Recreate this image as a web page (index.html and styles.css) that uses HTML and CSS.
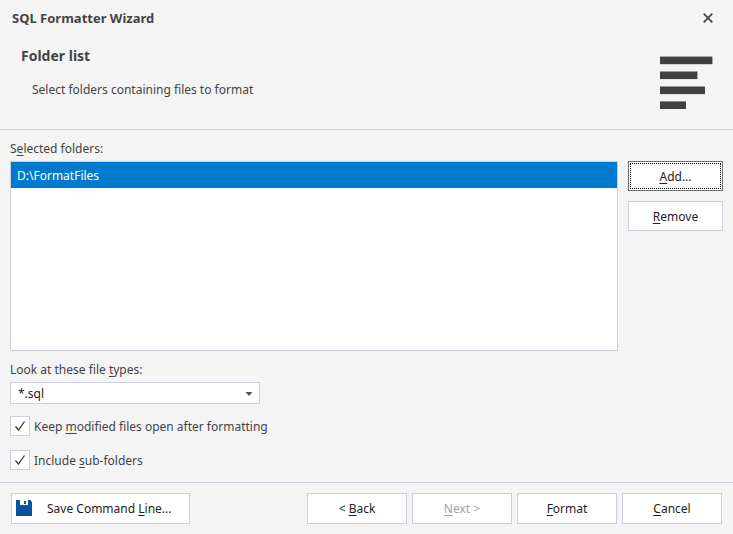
FILE: index.html
```html
<!DOCTYPE html>
<html lang="en">
<head>
    <meta charset="UTF-8">
    <meta name="viewport" content="width=device-width, initial-scale=1.0">
    <title>SQL Formatter Wizard</title>
    <link rel="stylesheet" href="styles.css">
</head>
<body>
    <form class="wizard">
        <header class="header">
            <div class="titlebar">
                <h1>SQL Formatter Wizard</h1>
                <button type="button" class="close" aria-label="Close">
                    <svg width="10" height="10" viewBox="0 0 10 10"><path d="M0.7 0.7L9.3 9.3M9.3 0.7L0.7 9.3" stroke="#444" stroke-width="1.7"/></svg>
                </button>
            </div>
            <div class="banner">
                <div class="intro">
                    <h2>Folder list</h2>
                    <p>Select folders containing files to format</p>
                </div>
                <svg class="lines" width="53" height="53" viewBox="0 0 53 53" fill="#404040">
                    <rect x="0" y="0.6" width="52.4" height="7.6"/>
                    <rect x="0" y="15.5" width="37.4" height="7.6"/>
                    <rect x="0" y="30.5" width="45" height="7.6"/>
                    <rect x="0" y="45.4" width="26" height="7.6"/>
                </svg>
            </div>
        </header>

        <main class="content">
            <label class="caption" for="folders">S<u>e</u>lected folders:</label>
            <div class="folders">
                <select id="folders" class="folder-list" size="7">
                    <option selected>D:\FormatFiles</option>
                </select>
                <div class="folder-actions">
                    <button type="button" class="btn default"><span><u>A</u>dd...</span></button>
                    <button type="button" class="btn"><span><u>R</u>emove</span></button>
                </div>
            </div>

            <label class="caption types-caption" for="types">Look at these file <u>t</u>ypes:</label>
            <div class="combo">
                <select id="types">
                    <option>*.sql</option>
                </select>
                <svg class="arrow" width="8" height="4" viewBox="0 0 8 4"><path d="M0.5 0H7.5L4 4Z" fill="#555"/></svg>
            </div>

            <div class="checks">
                <label class="check">
                    <input type="checkbox" checked>
                    <span>Keep <u>m</u>odified files open after formatting</span>
                </label>
                <label class="check">
                    <input type="checkbox" checked>
                    <span>Include <u>s</u>ub-folders</span>
                </label>
            </div>
        </main>

        <footer class="footer">
            <button type="button" class="btn save">
                <svg width="16" height="16" viewBox="0 0 16 16" fill="#0b529c"><path d="M0 0H4V5H12V0H14L16 2V16H0Z"/><path d="M8 1H10V4H8Z"/></svg>
                <span>Save Command <u>L</u>ine...</span>
            </button>
            <button type="button" class="btn"><span>&lt; <u>B</u>ack</span></button>
            <button type="button" class="btn" disabled><span><u>N</u>ext &gt;</span></button>
            <button type="submit" class="btn"><span><u>F</u>ormat</span></button>
            <button type="button" class="btn"><span><u>C</u>ancel</span></button>
        </footer>
    </form>
</body>
</html>
```

FILE: styles.css
```css
* {
    box-sizing: border-box;
}
body {
    margin: 0;
    background: #f4f4f4;
    color: #444;
    font: 12px/18px Tahoma, "Noto Sans", sans-serif;
}
button, select, input {
    font: inherit;
    color: #1e1e1e;
    margin: 0;
}
h1, h2, p {
    margin: 0;
}
u {
    text-underline-offset: 2px;
}
.wizard {
    display: flex;
    flex-direction: column;
    min-height: 100vh;
}
.header {
    border-bottom: 1px solid #cccedb;
}
.titlebar {
    display: flex;
    justify-content: space-between;
    align-items: center;
    padding: 9px 20px 0 12px;
}
.titlebar h1 {
    font-size: 13px;
}
.close {
    display: flex;
    padding: 0;
    border: none;
    background: none;
}
.banner {
    display: flex;
    justify-content: space-between;
    align-items: flex-end;
    padding: 21px 20px 20px 21px;
}
.intro h2 {
    font-size: 14px;
    line-height: 16px;
}
.intro p {
    padding: 17px 0 10px 11px;
}
.content {
    flex: 1;
    padding: 10px 10px 12px;
}
.caption {
    display: block;
    padding-bottom: 3px;
}
.folders {
    display: flex;
    gap: 10px;
}
.folder-list {
    flex: 1;
    height: 190px;
    padding: 0;
    border: 1px solid #cccedb;
    border-radius: 0;
    background: #fff;
    outline: none;
    overflow: hidden;
}
.folder-list option {
    padding: 5px 6px 4px;
}
.folder-list option:checked {
    background: #007acc linear-gradient(#007acc, #007acc);
    color: #fff;
}
.folder-actions {
    display: flex;
    flex-direction: column;
    gap: 10px;
    width: 95px;
}
.btn {
    height: 30px;
    padding: 2px 0 0;
    border: 1px solid #cccedb;
    background: #fff;
}
.btn.default {
    border-color: #707070;
    outline: 1px dotted #000;
    outline-offset: -3px;
}
.btn:disabled {
    color: #a2a4a5;
}
.types-caption {
    padding-top: 10px;
}
.combo {
    position: relative;
    width: 250px;
}
.combo select {
    display: block;
    width: 100%;
    height: 22px;
    padding: 2px 7px 0;
    border: 1px solid #cccedb;
    border-radius: 0;
    background: #fff;
    appearance: none;
}
.arrow {
    position: absolute;
    right: 7px;
    top: 10px;
    pointer-events: none;
}
.checks {
    display: flex;
    flex-direction: column;
    gap: 14px;
    padding-top: 12px;
}
.check {
    display: flex;
    align-items: center;
    gap: 4px;
}
.check span {
    padding-top: 2px;
}
.check input {
    appearance: none;
    width: 20px;
    height: 20px;
    border: 1px solid #cccedb;
    background: #fff;
}
.check input:checked {
    background: #fff url("data:image/svg+xml,%3Csvg xmlns='http://www.w3.org/2000/svg' width='18' height='18'%3E%3Cpath d='M4.5 9.5L7.5 13L13.5 4.5' fill='none' stroke='%23333' stroke-width='1.3'/%3E%3C/svg%3E") center no-repeat;
}
.footer {
    display: flex;
    gap: 5px;
    padding: 10px 11px;
    border-top: 1px solid #cccedb;
}
.footer .btn {
    width: 100px;
    height: 31px;
    padding: 0;
}
.footer .save {
    display: flex;
    align-items: center;
    gap: 15px;
    width: 179px;
    margin-right: auto;
    padding: 0 4px 2px;
}
.save span {
    padding-top: 2px;
}
```
